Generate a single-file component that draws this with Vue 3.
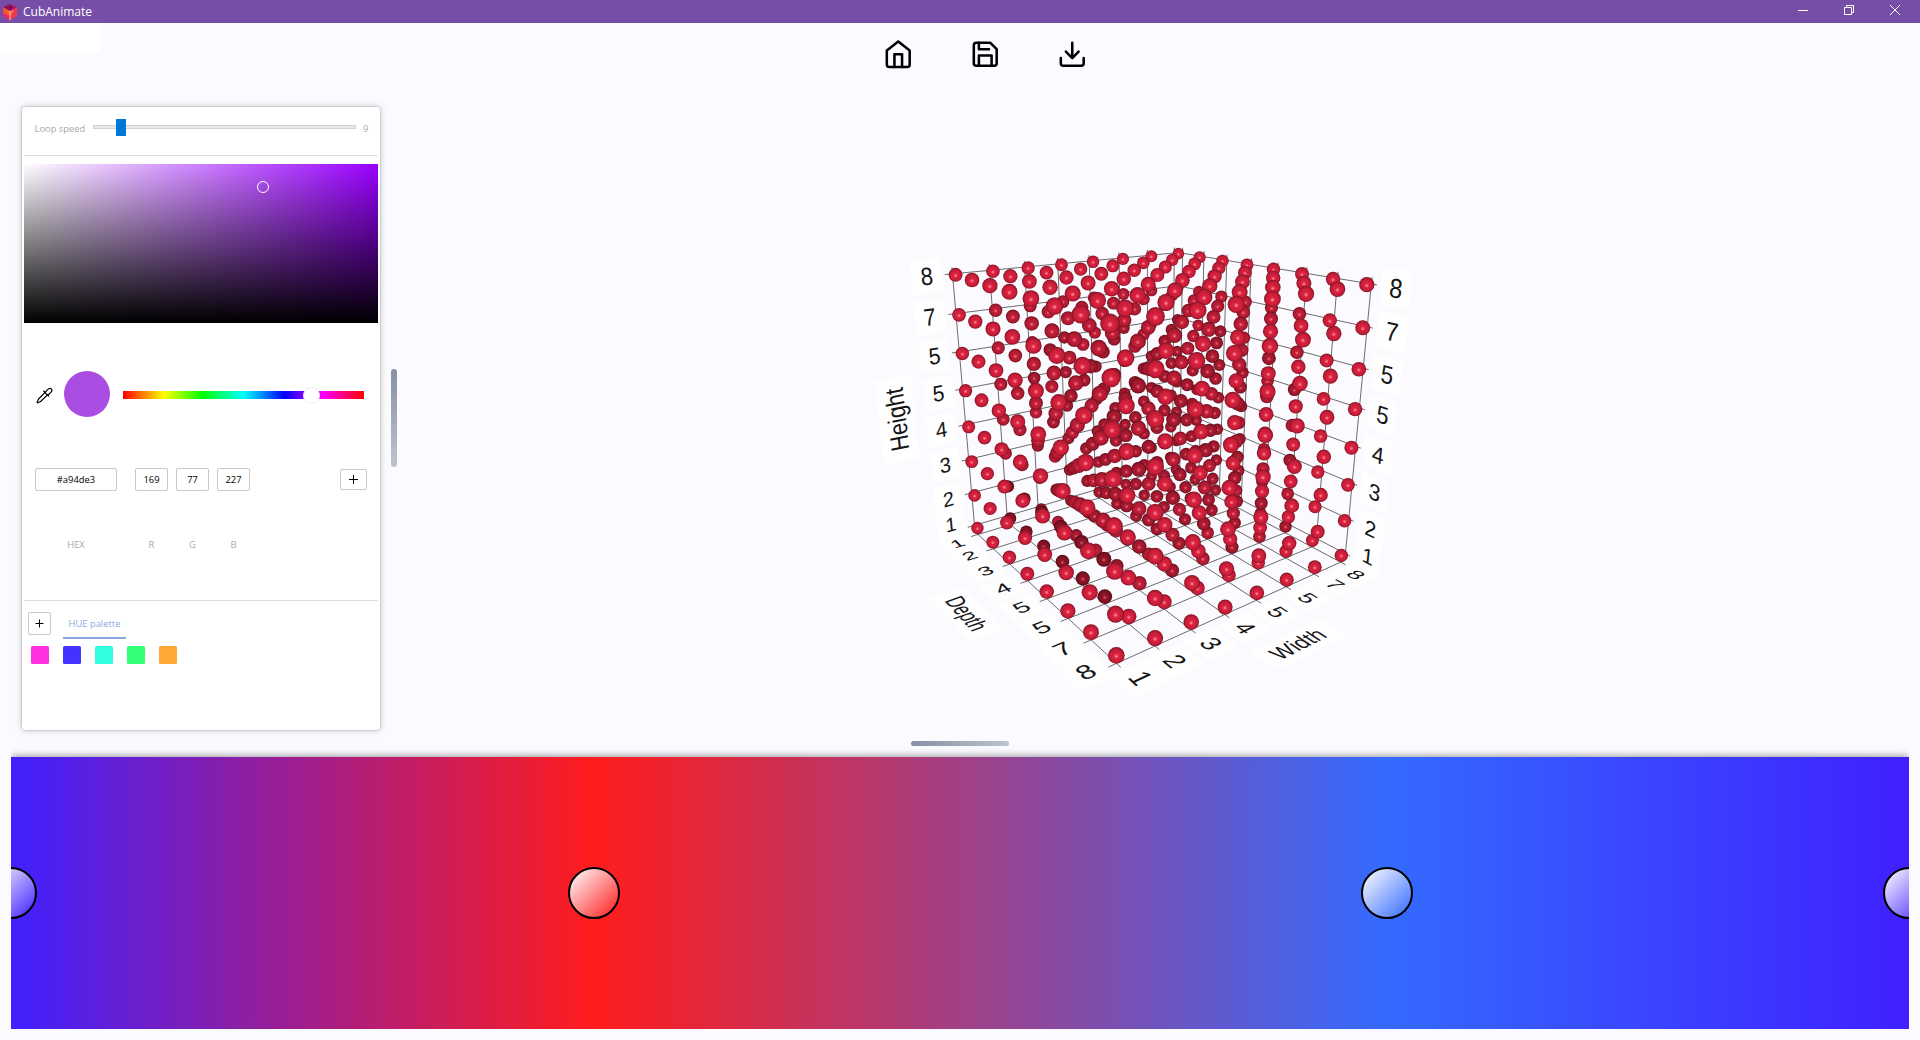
<script setup>
/* camera: world axes (width, height, depth) run 1..8, output is page pixels of the plot */
const CAM = [0.55333, 0.002221, 0.411879, -0.035374, -0.15154, -0.642106, 0.206696, -0.158123, 0.101577, -0.060955, -0.139268]

function project(w, h, d) {
  const x = (w - 4.5) / 3.5
  const y = (h - 4.5) / 3.5
  const z = (d - 4.5) / 3.5
  const q = CAM[8] * x + CAM[9] * y + CAM[10] * z + 1
  return {
    x: 1160 + (200 * (CAM[0] * x + CAM[1] * y + CAM[2] * z + CAM[3])) / q,
    y: 450 + (200 * (CAM[4] * x + CAM[5] * y + CAM[6] * z + CAM[7])) / q,
    q
  }
}

const STEPS = [1, 2, 3, 4, 5, 6, 7, 8]
const LO = 0.8
const HI = 8.16

/* balls, far ones first; shade grows with the distance from the lit faces */
const balls = []
for (const w of STEPS) {
  for (const h of STEPS) {
    for (const d of STEPS) {
      const p = project(w, h, d)
      const t = Math.min(w - 1, (8 - h) * 0.75, (8 - d) * 0.65)
      const s = t < 0.7 ? 0 : t < 1.1 ? (h < 3 && w < 4 ? 3 : 1) : t < 2.2 ? 1 + ((w + h + d) % 2) : 2
      balls.push({ x: p.x, y: p.y, r: 6.85 / p.q, q: p.q, s })
    }
  }
}
balls.sort((a, b) => b.q - a.q)

const shades = [
  ['#ff93a2', '#dd2340', '#c41d38', '#7a1221'],
  ['#f27c8d', '#c61f39', '#ac1a31', '#680f1c'],
  ['#e66c7f', '#b21b33', '#98172b', '#5a0d18'],
  ['#d65c70', '#931529', '#7c1122', '#480911']
]

const lines = []
function line(a, b) {
  const p = project(...a)
  const q = project(...b)
  lines.push({ x1: p.x, y1: p.y, x2: q.x, y2: q.y })
}
for (const i of STEPS) {
  line([i, LO, LO], [i, HI, LO])
  line([LO, i, LO], [HI, i, LO])
  line([HI, LO, i], [HI, HI, i])
  line([HI, i, LO], [HI, i, HI])
  line([i, LO, LO], [i, LO, HI])
  line([LO, LO, i], [HI, LO, i])
}

/* local text frame: unit vectors along two world axes at a point of the scene */
function frame(at, right, down, cx, cy) {
  const vec = v => {
    const a = project(at[0] + v[0] / 2, at[1] + v[1] / 2, at[2] + v[2] / 2)
    const b = project(at[0] - v[0] / 2, at[1] - v[1] / 2, at[2] - v[2] / 2)
    return [(a.x - b.x) / 20, (a.y - b.y) / 20]
  }
  return `matrix(${[...vec(right), ...vec(down), cx, cy].map(n => n.toFixed(4)).join(' ')})`
}
const F = 0.64
const FH = 0.6
const names = ['1', '2', '3', '4', '5', '5', '7', '8']
const leftPos = [[951, 524.5], [948.5, 499.3], [945.3, 465], [941.5, 429.8], [938.4, 393.3], [934.6, 356], [929.7, 317], [926.7, 276.2]]
const rightPos = [[1367.8, 556.3], [1370.5, 528.7], [1374.5, 492.4], [1378, 454.7], [1382.6, 415], [1387, 374.7], [1392, 331.8], [1396, 288.2]]
const depthPos = [[957.5, 543.5], [969.7, 555.5], [985.6, 571], [1003, 588.5], [1021.5, 607.3], [1041.5, 627.5], [1062.6, 649], [1085.7, 672]]
const widthPos = [[1141, 678], [1175, 661], [1211, 643.5], [1245.5, 628], [1277.5, 612], [1307.5, 598], [1335, 584.5], [1356, 574.7]]

const labels = []
names.forEach((text, n) => {
  const i = n + 1
  labels.push({ text, w: 24, m: frame([0.3, i, 1], [0.55, 0, 0], [0, -FH, 0], ...leftPos[n]) })
  labels.push({ text, w: 22, m: frame([8, i, 8.7], [0, 0, 0.62], [0, -FH, 0], ...rightPos[n]) })
  labels.push({ text, w: 22, m: frame([0.3, 1, i], [F, 0, 0], [0, 0, F], ...depthPos[n]) })
  labels.push({ text, w: 22, m: frame([i, 1, 8.7], [0, 0, F], [-F, 0, 0], ...widthPos[n]) })
})
labels.push({ text: 'Height', w: 74, m: frame([-0.3, 4.5, 1], [0, 0.58, 0], [0.66, 0, 0], 897, 419.6) })
labels.push({ text: 'Depth', w: 70, m: frame([-0.5, 1, 4.5], [0, 0, 0.6], [-0.6, 0, 0], 966.7, 613.5) })
labels.push({ text: 'Width', w: 70, m: frame([4.5, 1, 9.5], [0.58, 0, 0], [0, 0, 0.58], 1297.7, 644) })

const rgb = [169, 77, 227]
const palette = ['#ff2fe2', '#4433ff', '#33ffe0', '#33ff77', '#ffa833']
const knobs = [
  { left: 0, color: '#4020ff' },
  { left: 583, color: '#ff1c1c' },
  { left: 1376, color: '#346aff' },
  { left: 1898, color: '#4020ff' }
]
</script>

<template>
  <div class="app">
    <header class="titlebar">
      <svg class="logo" viewBox="0 0 14 16">
        <path d="M7 0 14 3.3 7 7 0 3.3z" fill="#b4106a" />
        <path d="M7 0v7L0 3.3z" fill="#8c0f5c" />
        <path d="M7 1.2 10 3.4 7 6z" fill="#5d0a50" />
        <path d="M0 3.3 7 7v9l-7-4z" fill="#f4542f" />
        <path d="M14 3.3 7 7v9l7-4z" fill="#ee3a50" />
        <path d="M0 9v3l7 4v-4z" fill="#e6246c" />
        <path d="M3 5.6 7 7.4l4-1.8L8 12z" fill="#ff8038" opacity=".75" />
        <path d="M7 7v9" stroke="#ffb08c" stroke-width="1.2" />
      </svg>
      <span class="name">CubAnimate</span>
      <div class="window-buttons">
        <svg width="10" height="10" viewBox="0 0 10 10"><path d="M0 5.5h10" /></svg>
        <svg width="10" height="10" viewBox="0 0 10 10"><path d="M.5 2.5h7v7h-7zM2.5 2.5v-2h7v7h-2" /></svg>
        <svg width="10" height="10" viewBox="0 0 10 10"><path d="M0 0 10 10M10 0 0 10" /></svg>
      </div>
    </header>

    <div class="toolbar">
      <div class="chip"></div>
      <nav class="tools">
        <svg viewBox="0 0 24 24"><path d="m3 9 9-7 9 7v11a2 2 0 0 1-2 2H5a2 2 0 0 1-2-2z" /><path d="M9 22V12h6v10" /></svg>
        <svg viewBox="0 0 24 24"><path d="M19 21H5a2 2 0 0 1-2-2V5a2 2 0 0 1 2-2h11l5 5v11a2 2 0 0 1-2 2z" /><path d="M17 21v-8H7v8M7 3v5h8" /></svg>
        <svg viewBox="0 0 24 24"><path d="M21 15v4a2 2 0 0 1-2 2H5a2 2 0 0 1-2-2v-4M7 10l5 5 5-5M12 15V3" /></svg>
      </nav>
    </div>

    <main class="workspace">
      <section class="panel">
        <div class="speed">
          <span class="speed-label">Loop speed</span>
          <div class="track"><div class="thumb"></div></div>
          <span class="speed-value">9</span>
        </div>
        <div class="picker"><div class="marker"></div></div>
        <div class="hue-row">
          <svg class="dropper" viewBox="0 0 17 17">
            <path d="M9.3 5.2 2.6 12c-.8.9-.5 1.9-1.5 3l.8.8c1-.9 2.1-.7 3-1.5l6.8-6.7" />
            <path d="m7.6 4.2 5 5M9 5.4l2.900-3c1-1 2.600-1.300 3.400-.5s.5 2.400-.5 3.400l-3 2.900" />
          </svg>
          <div class="swatch"></div>
          <div class="hue"><div class="hue-thumb"></div></div>
        </div>
        <div class="fields">
          <label class="field hex"><span class="box">#a94de3</span><span class="cap">HEX</span></label>
          <label v-for="(c, i) in ['R', 'G', 'B']" :key="c" class="field num">
            <span class="box">{{ rgb[i] }}</span><span class="cap">{{ c }}</span>
          </label>
          <button class="add wide"><svg viewBox="0 0 11 11"><path d="M5.5 1v9M1 5.5h9" /></svg></button>
        </div>
        <div class="palette-head">
          <button class="add"><svg viewBox="0 0 11 11"><path d="M5.5 1.5v8M1.500 5.500h8" /></svg></button>
          <span class="tab">HUE palette</span>
        </div>
        <div class="palette">
          <i v-for="c in palette" :key="c" :style="{ background: c }"></i>
        </div>
      </section>

      <div class="v-handle"></div>

      <svg class="plot" viewBox="860 230 580 480">
        <defs>
          <radialGradient v-for="(s, i) in shades" :id="'ball' + i" :key="i" cx=".5" cy=".5" r=".52" fx=".5" fy=".57">
            <stop offset="0" :stop-color="s[0]" />
            <stop offset=".28" :stop-color="s[1]" />
            <stop offset=".72" :stop-color="s[2]" />
            <stop offset="1" :stop-color="s[3]" />
          </radialGradient>
        </defs>
        <g v-for="(l, i) in labels" :key="'p' + i" :transform="l.m">
          <rect class="plate" :x="-l.w / 2 - 2" y="-14" :width="l.w + 4" height="28" />
        </g>
        <line v-for="(l, i) in lines" :key="'l' + i" class="grid" v-bind="l" />
        <circle v-for="(b, i) in balls" :key="'b' + i" :cx="b.x" :cy="b.y" :r="b.r" :fill="`url(#ball${b.s})`" />
        <g v-for="(l, i) in labels" :key="'t' + i" :transform="l.m">
          <text class="axis" y="7">{{ l.text }}</text>
        </g>
      </svg>
    </main>

    <div class="h-handle"></div>

    <section class="timeline">
      <div class="gradient">
        <div v-for="(k, i) in knobs" :key="i" class="knob" :style="{ left: k.left + 'px', '--c': k.color }"></div>
      </div>
    </section>
  </div>
</template>

<style>
body { background: #fbfaff; }
</style>

<style scoped>
.app {
  display: flex;
  flex-direction: column;
  width: 1920px;
  height: 1040px;
  overflow: hidden;
  background: #fbfaff;
  font-family: "Open Sans", "Noto Sans", sans-serif;
  font-size: 9.4px;
}
.app *, .app { box-sizing: border-box; }

.titlebar { display: flex; align-items: center; flex: none; height: 23px; background: #764ea8; color: #fff; }
.logo { width: 14px; height: 16px; margin-left: 3px; }
.name { margin-left: 6px; font-size: 12px; line-height: 23px; }
.window-buttons { display: flex; gap: 36px; margin: -3px 20px 0 auto; }
.window-buttons svg { fill: none; stroke: #fff; stroke-width: 1; }

.toolbar { display: flex; flex: none; height: 84px; }
.chip { width: 100px; height: 30px; background: #fff; }
.tools { display: flex; gap: 56.5px; margin: 15.5px 0 0 783px; height: 31px; }
.tools svg { width: 30.5px; height: 30.5px; fill: none; stroke: #000; stroke-width: 2; stroke-linecap: round; stroke-linejoin: round; }

.workspace { display: flex; flex: none; height: 623px; padding-left: 22px; }
.panel { width: 358px; height: 623px; padding: 0 2px; background: #fff; border-radius: 3px; box-shadow: 0 0 2px rgba(0, 0, 0, .3), 0 0 7px rgba(0, 0, 0, .22); }
.speed { display: flex; align-items: flex-start; height: 49px; padding: 14px 0 0 10.5px; border-bottom: 1px solid #dedede; color: #a9a9a9; }
.speed > * { flex: none; }
.speed-label, .speed-value { line-height: 15px; }
.speed-label { width: 58.5px; }
.track { width: 263px; height: 4px; margin-top: 4px; border: 1px solid #d2d2d2; background: #e7eaea; }
.thumb { width: 10px; height: 17px; margin: -7px 0 0 22px; background: #0078d7; }
.speed-value { margin-left: 7px; }
.picker {
  height: 159px;
  margin-top: 8px;
  padding-top: 17px;
  background: linear-gradient(to top, #000, transparent), linear-gradient(to right, #fff, #9900ff);
}
.marker { width: 12px; height: 12px; margin-left: 232.5px; border: 1px solid #fff; border-radius: 50%; }
.hue-row { display: flex; align-items: center; height: 46px; margin-top: 48px; padding-left: 12px; }
.dropper { width: 17px; height: 17px; margin-top: 2px; fill: none; stroke: #000; stroke-width: 1.2; stroke-linecap: round; stroke-linejoin: round; }
.swatch { width: 46px; height: 46px; margin-left: 11px; border-radius: 50%; background: #a94de3; }
.hue {
  width: 241px;
  height: 8px;
  margin: 2px 0 0 13px;
  background: linear-gradient(to right, #f00, #ff0 17%, #0f0 33%, #0ff 50%, #00f 67%, #f0f 83%, #f00);
}
.hue-thumb { width: 17px; height: 17px; margin: -4.5px 0 0 179.5px; border: 1px solid #eee; border-radius: 50%; background: #fff; }
.fields { display: flex; height: 133px; margin-top: 51px; padding-left: 11px; border-bottom: 1px solid #dedede; }
.field { display: flex; flex-direction: column; align-items: center; }
.field.hex { width: 82px; margin-right: 18px; }
.field.num { width: 33px; margin-right: 8px; }
.box { width: 100%; height: 23px; border: 1px solid #c8c8c8; border-radius: 2px; text-align: center; line-height: 22px; color: #000; }
.cap { margin-top: 47px; line-height: 14px; color: #a9a9a9; }
.add { display: grid; place-items: center; width: 23px; height: 23px; padding: 0; border: 1px solid #c8c8c8; border-radius: 2px; background: #fff; }
.add.wide { width: 27px; height: 21px; margin: 1px 0 0 82px; }
.add svg { width: 11px; height: 11px; fill: none; stroke: #000; stroke-width: 1; }
.palette-head { display: flex; height: 27px; margin-top: 11px; padding-left: 4px; }
.tab { width: 63px; height: 27px; margin-left: 12px; border-bottom: 2px solid #8ba9e0; color: #8ba9e0; line-height: 23px; text-align: center; white-space: nowrap; }
.palette { display: flex; gap: 14px; margin-top: 7px; padding-left: 7px; }
.palette i { width: 18px; height: 18px; border-radius: 1.5px; }

.v-handle { width: 6px; height: 98px; margin: 262px 0 0 11px; border-radius: 3px; background: linear-gradient(#8790a4, #bcc4ce); }
.plot { width: 580px; height: 480px; margin: 123px 0 0 463px; overflow: visible; }
.grid { stroke: #3c3c3c; stroke-width: .75; }
.plate { fill: #fefeff; }
.axis { font: 20px "Liberation Sans", Arial, sans-serif; text-anchor: middle; fill: #151515; }

.h-handle { flex: none; width: 98px; height: 5px; margin: 11px 0 0 911px; border-radius: 3px; background: linear-gradient(to right, #8790a4, #bcc4ce); }
.timeline { flex: none; width: 1898px; height: 283px; margin-left: 11px; padding-top: 11px; overflow: hidden; }
.gradient {
  position: relative;
  height: 272px;
  background: linear-gradient(to right, #4020ff, #ff1c1c 30.7%, #346aff 72.5%, #4020ff);
  box-shadow: 0 0 8px rgba(0, 0, 0, .5);
}
.knob {
  position: absolute;
  top: 110px;
  width: 52px;
  height: 52px;
  margin-left: -26px;
  border: 2px solid #000;
  border-radius: 50%;
  background: linear-gradient(135deg, #fff, var(--c));
}
</style>
